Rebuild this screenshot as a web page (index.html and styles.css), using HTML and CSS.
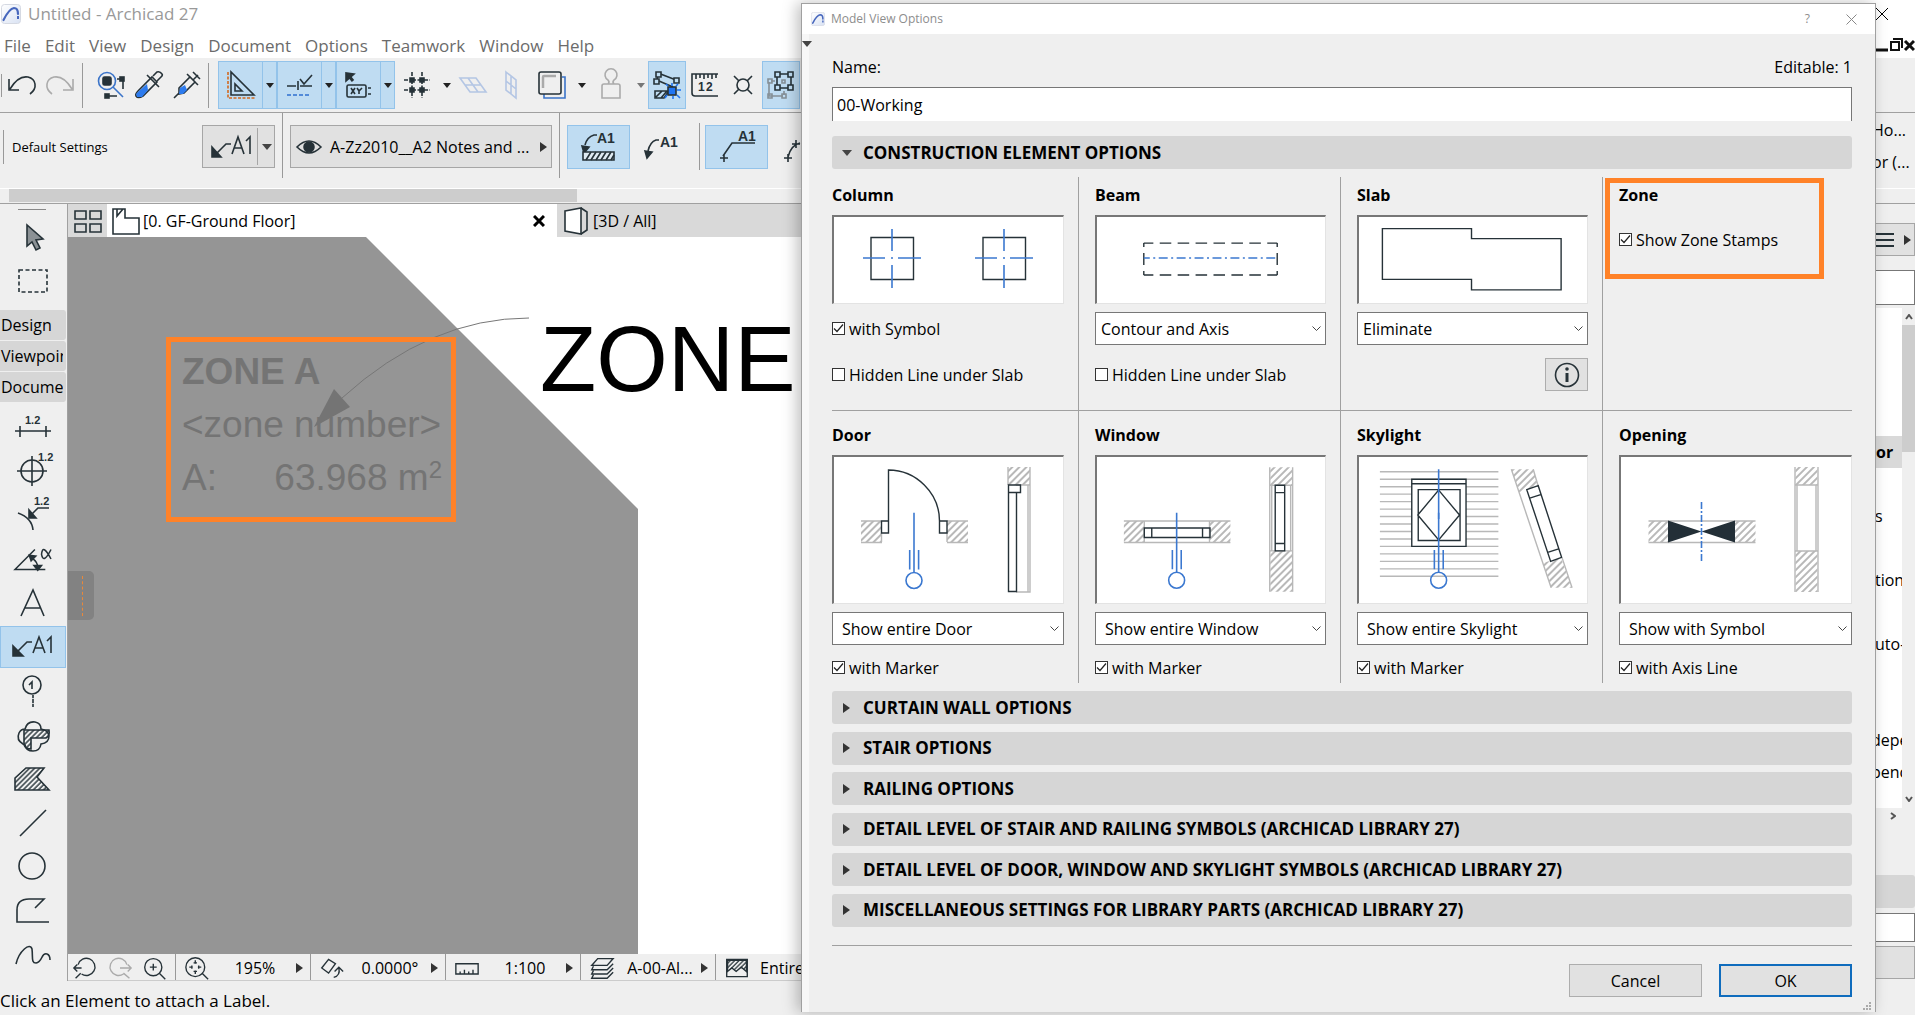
FILE: index.html
```html
<!DOCTYPE html>
<html lang="en">
<head>
<meta charset="utf-8">
<title>Untitled - Archicad 27</title>
<link rel="stylesheet" href="styles.css">
</head>
<body>
<svg class="defs" aria-hidden="true">
  <defs>
    <pattern id="hatch" width="5" height="5" patternUnits="userSpaceOnUse" patternTransform="rotate(45)"><path d="M1 0V5" stroke="#a6a6a6" stroke-width="1.6"/></pattern>
    <pattern id="darkhatch" width="3.6" height="3.6" patternUnits="userSpaceOnUse" patternTransform="rotate(45)"><path d="M1 0V4" stroke="#263238" stroke-width="1.4"/></pattern>
    <linearGradient id="logo" x1="0" y1="0" x2="1" y2="1"><stop offset="0" stop-color="#fff"/><stop offset="1" stop-color="#d9e2f3"/></linearGradient>
    <symbol id="app" viewBox="0 0 20 20"><rect x=".5" y=".5" width="19" height="19" rx="3" fill="url(#logo)" stroke="#d5d9e2"/><path d="M2.500 16C6 9 9 4.500 13 4Q17 4 17 10" fill="none" stroke="#4767bd" stroke-width="2.200" stroke-linecap="round"/><path d="M17 12v3" stroke="#4767bd" stroke-width="2"/></symbol>
    <symbol id="marker" viewBox="0 0 20 78"><path d="M10 0V60M5.700 37.500V57M14.600 37.500V57"/><circle cx="10" cy="68" r="8"/></symbol>
  </defs>
</svg>

<div class="app">
  <header class="titlebar"><svg class="logo"><use href="#app"/></svg><span>Untitled - Archicad 27</span>
    <button class="win-close" aria-label="Close"><svg width="14" height="14"><path d="M1 1L13 13M13 1L1 13" stroke="#000" fill="none"/></svg></button>
  </header>
  <nav class="menubar">
    <a href="#">File</a><a href="#">Edit</a><a href="#">View</a><a href="#">Design</a><a href="#">Document</a><a href="#">Options</a><a href="#">Teamwork</a><a href="#">Window</a><a href="#">Help</a>
    <svg class="doc-controls" width="40" height="16"><path d="M1 13h12" stroke="#111" stroke-width="3"/><path d="M16 5h8v8h-8zM18 2h9v9" fill="none" stroke="#111" stroke-width="2"/><path d="M30 4l9 9M39 4l-9 9" stroke="#111" stroke-width="3"/></svg>
  </nav>

  <div class="toolbar">
    <i class="grip"></i>
    <button class="tool" aria-label="Undo"><svg class="ic" viewBox="0 0 28 28"><path d="M1 8V19H11M2 18C8 8 14 5 20 6C28 8 30 17 22 23"/></svg></button>
    <button class="tool dim" aria-label="Redo"><svg class="ic" viewBox="0 0 28 28"><path d="M27 8V19H17M26 18C20 8 14 5 8 6C0 8-2 17 6 23"/></svg></button>
    <i class="sep"></i>
    <button class="tool" aria-label="Find"><svg class="ic" viewBox="0 0 28 28"><g stroke="#3b74c9"><circle cx="10" cy="10" r="8.500"/><path d="M16 16L26 26"/></g><rect x="6" y="6" width="8" height="8" rx="1.500" class="f"/><path d="M20 8h6M26 8v10M9 25h11"/><rect x="23" y="6" width="4" height="4" class="f"/><rect x="8" y="23" width="4" height="4" class="f"/></svg></button>
    <button class="tool" aria-label="Pick up"><svg class="ic" viewBox="0 0 28 28"><path d="M3 20L17 6l5 5L8 25Q3 28 1 25Q0 23 3 20z" fill="none"/><path d="M4 20l8-7 1 6-6 7-5 0-1-3z" fill="#2d7bee" stroke="none"/><path d="M12 4L24 16M18 5l4-4q3-1 5 2 1 1-1 3l-4 4"/></svg></button>
    <button class="tool" aria-label="Inject"><svg class="ic" viewBox="0 0 28 28"><path d="M1 27l5-5M6 17L17 6l5 5L11 22l-5 1zM14 3l11 11M20 1l7 7M20 9l5-5"/><path d="M7 17l5-3 2 5-4 4-4 0z" fill="#2d7bee" stroke="none"/></svg></button>
    <i class="sep wide"></i>
    <span class="split on"><button aria-label="Guide lines"><svg class="ic" viewBox="0 0 28 28"><path d="M4 1V24H27zM8 13v7h7z"/><path d="M1 1V27H28" stroke="#d2691e" stroke-dasharray="3 1.500"/></svg></button><button class="drop" aria-label="Guide line options"></button></span>
    <span class="split on"><button aria-label="Snap guides"><svg class="ic" viewBox="0 0 28 28"><path d="M1 15h9M12 10v9M14 15h12M14 8l4 5 8-9"/><path d="M1 24h24" stroke="#2f6fd0" stroke-dasharray="4 2"/></svg></button><button class="drop" aria-label="Snap guide options"></button></span>
    <span class="split on"><button aria-label="Coordinates"><svg class="ic" viewBox="0 0 28 28"><path d="M1 2v8l8-7z" class="f"/><path d="M4 5l4 5" stroke-width="3"/><rect x="2" y="14" width="19" height="12" rx="1.500"/><path d="M6 17l4 6M10 17l-4 6M12 17l2 3 3-3M14 20v3M23 17h3M23 23h3"/></svg></button><button class="drop" aria-label="Coordinate options"></button></span>
    <span class="split"><button aria-label="Grid"><svg class="ic" viewBox="0 0 28 28"><path d="M1 9h5M9 9h9M21 9h6M1 19h5M9 19h9M21 19h6M9 1v5M9 9v9M9 21v6M19 1v5M19 9v9M19 21v6" stroke-dasharray="4 1.500"/><path d="M7 7h4v4h-4zM17 7h4v4h-4zM7 17h4v4h-4zM17 17h4v4h-4z" class="f"/></svg></button><button class="drop" aria-label="Grid options"></button></span>
    <button class="tool pale" aria-label="Editing plane"><svg class="ic" viewBox="0 0 28 28"><path d="M1 7h16l10 14H11zM6 14h16M9 7l10 14"/></svg></button>
    <button class="tool pale" aria-label="Vertical plane"><svg class="ic" viewBox="0 0 28 28"><path d="M9 1l10 8v18L9 19zM14 5v18M9 10l10 8"/></svg></button>
    <span class="split"><button aria-label="Trace"><svg class="ic" viewBox="0 0 28 28"><path d="M6 23v4h21V6h-3" stroke="#3b74c9"/><rect x="1" y="1" width="22" height="22" rx="2"/><path d="M5 17V6q0-1 1-1h12" stroke="#aaa" stroke-width="2.500"/></svg></button><button class="drop" aria-label="Trace options"></button></span>
    <span class="split dim"><button aria-label="Gravity"><svg class="ic" viewBox="0 0 28 28"><path d="M5 27V15q0-2 2-2h14q2 0 2 2V27zM11 13q2-2 0-4a6 6 0 1 1 6 0q-2 2 0 4"/></svg></button><button class="drop" aria-label="Gravity options"></button></span>
    <button class="tool on" aria-label="Edit selection"><svg class="ic" viewBox="0 0 28 28"><path d="M5 2l18 7M4 9L5 3M6 10l14 6M2 20h14l-5 7H2zM3 26l6-6M8 27l6-7"/><path d="M3 1h5v5h-5zM1 8h5v5h-5zM21 7h5v5h-5z" fill="#bfddf3"/><rect x="15" y="16" width="8" height="8" fill="#1f74f2"/><path d="M13 13l2 2M19 12v3M25 13l-2 2M24 19h4M24 24l3 3M20 25v3M14 24l-2 3" stroke="#1f74f2"/></svg></button>
    <button class="tool" aria-label="Measure"><svg class="ic" viewBox="0 0 28 28"><path d="M27 3H1V22q0 3 3 3H27M5 3v5M9 3v4M13 3v5M17 3v4M21 3v5M25 3v4"/><text x="7" y="20">1</text><text x="15" y="20">2</text></svg></button>
    <button class="tool" aria-label="Suspend groups"><svg class="ic" viewBox="0 0 28 28"><circle cx="14" cy="14" r="6"/><path d="M5 5l5 5M23 5l-5 5M5 23l5-5M23 23l-5-5"/></svg></button>
    <button class="tool on" aria-label="Group"><svg class="ic" viewBox="0 0 28 28"><g stroke="#858f96"><path d="M2 11v14h14M4 10h4M17 20v4"/><path d="M1 8h4v4h-4zM1 23h4v4h-4zM15 23h4v4h-4zM15 9h3v3h-3z"/></g><path d="M10 3h14v14H10z"/><path d="M8 1h5v5h-5zM21 1h5v5h-5zM8 14h5v5h-5zM21 14h5v5h-5z" fill="#bfddf3"/></svg></button>
  </div>

  <div class="infobar">
    <div class="info-row">
      <i class="grip tall"></i>
      <span class="default">Default Settings</span>
      <button class="field label-pick" aria-label="Label settings"><svg class="ic a1" viewBox="0 0 42 28"><path d="M4 22l11-11h5M21 21l6-17 6 17M23 15h8M35 8l4-4v17"/><path d="M1 14v10h9z" class="f"/></svg><i class="split-line"></i><b class="caret big"></b></button>
      <i class="vline"></i>
      <button class="field layer"><svg class="ic" viewBox="0 0 28 28"><path d="M2 14Q14 2 26 14Q14 26 2 14z"/><circle cx="14" cy="14" r="5" class="f"/></svg><span>A-Zz2010__A2 Notes and ...</span><b class="caret right"></b></button>
      <i class="vline"></i>
      <button class="mode on" aria-label="Associative label"><svg class="ic m" viewBox="0 0 36 32"><path d="M4 14q2-8 9-10h3"/><path d="M1 15l7 1-5 6z" class="f"/><text x="16" y="12">A1</text><path d="M2 21h31v8H2z" fill="#dfeaf2"/><path d="M5 29l5-8M10 29l5-8M15 29l5-8M20 29l5-8M25 29l5-8M30 29l3-5"/></svg></button>
      <button class="mode" aria-label="Independent label"><svg class="ic m" viewBox="0 0 36 32"><path d="M4 20q2-9 8-11h3"/><path d="M1 20l7 1-5 6z" class="f"/><text x="16" y="16">A1</text></svg></button>
      <i class="vline short"></i>
      <button class="mode on" aria-label="Broken pointer"><svg class="ic m" viewBox="0 0 36 32"><path d="M4 25L13 12h23M1 27h8M5 23v8"/><text x="19" y="10">A1</text></svg></button>
      <button class="mode" aria-label="Straight pointer"><svg class="ic m" viewBox="0 0 36 32"><path d="M6 26q3-12 12-14M2 27h8M6 23v8M10 13h8M14 9v8M20 13h8M24 9v8"/></svg></button>
    </div>
    <div class="hscroll"><i></i></div>
    <div class="info-side"><span>Ho...</span><span>or (...</span></div>
  </div>

  <main class="work">
    <aside class="toolbox">
      <i class="handle"></i>
      <button aria-label="Arrow"><svg class="ic t" viewBox="0 0 36 36"><path d="M12 6v21l5-4 4 8 4-2-4-8 7-1z" fill="#8b9195"/></svg></button>
      <button aria-label="Marquee"><svg class="ic t" viewBox="0 0 36 36"><rect x="4" y="7" width="28" height="22" stroke-dasharray="4 2.500"/></svg></button>
      <button class="group">Design</button><button class="group">Viewpoint</button><button class="group">Document</button>
      <button aria-label="Dimension"><svg class="ic t" viewBox="0 0 36 36"><path d="M0 22h36M5 17v11M31 17v11"/><text x="10" y="15">1.2</text></svg></button>
      <button aria-label="Level dimension"><svg class="ic t" viewBox="0 0 36 36"><circle cx="17" cy="18" r="11"/><path d="M17 3v30M2 18h30"/><text x="23" y="8">1.2</text></svg></button>
      <button aria-label="Radial dimension"><svg class="ic t" viewBox="0 0 36 36"><path d="M3 16q14 5 15 17M15 19l8-8h11"/><path d="M14 13v8h7z" class="f"/><text x="19" y="8">1.2</text></svg></button>
      <button aria-label="Angle dimension"><svg class="ic t" viewBox="0 0 38 36"><path d="M32 29H0L21 8M18 17q6 4 6 10"/><path d="M15 14l7 1-5 5zM20 25h8l-4 5z" class="f"/><path d="M39 8q-8 16-10 5q1-12 10 5" transform="translate(-1 0)"/></svg></button>
      <button aria-label="Text"><svg class="ic t" viewBox="0 0 36 36"><path d="M6 31L18 5l11 26M10 23h16"/></svg></button>
      <button class="on" aria-label="Label"><svg class="ic l" viewBox="0 0 42 28"><path d="M4 20l11-11h5M21 20l6-16 6 16M23 15h8M35 8l4-4v16"/><path d="M1 13v10h10z" class="f"/></svg></button>
      <button aria-label="Grid element"><svg class="ic t" viewBox="0 0 36 36"><circle cx="17" cy="12" r="9"/><path d="M14 12l3-3v7M18 22v12" /><path d="M18 25v1M18 30v1" stroke="#efefef"/></svg></button>
      <button aria-label="Change"><svg class="ic t" viewBox="0 0 36 36"><path d="M8 27q-7-4-4-11q2-4 6-4q2-8 10-7q6 1 6 7q7 1 8 7q0 7-8 8q-1 7-8 7q-7 0-8-6z"/><path d="M9 13h25q1 6-3 8H16v11q-7 0-7-6z" fill="url(#darkhatch)"/></svg></button>
      <button aria-label="Fill"><svg class="ic t" viewBox="0 0 36 36"><path d="M0 29V17L11 7H29L22 16L34 29z" fill="url(#darkhatch)"/></svg></button>
      <button aria-label="Line"><svg class="ic t" viewBox="0 0 36 36"><path d="M5 31L31 5"/></svg></button>
      <button aria-label="Circle"><svg class="ic t" viewBox="0 0 36 36"><circle cx="17" cy="17" r="13"/></svg></button>
      <button aria-label="Polyline"><svg class="ic t" viewBox="0 0 36 36"><path d="M34 29H2V17Q2 6 14 6H29L20 15"/></svg></button>
      <button aria-label="Spline"><svg class="ic t" viewBox="0 0 36 36"><path d="M1 27C4 14 15 5 17 12C18 20 16 26 21 26C28 25 26 15 32 17Q35 18 35 23"/></svg></button>
    </aside>

    <section class="viewer">
      <div class="tabs">
        <button class="tabgrid" aria-label="Tab overview"><svg class="ic" viewBox="0 0 28 28"><path d="M1 4h11v8H1zM16 4h11v8H16zM1 17h11v8H1zM16 17h11v8H16z"/></svg></button>
        <button class="tab active"><svg class="ic" viewBox="0 0 28 28"><path d="M1 2H13V11H27V27H1zM5 2v7l6-7"/></svg><span>[0. GF-Ground Floor]</span><svg class="x" width="12" height="12"><path d="M1 1l10 10M11 1L1 11" stroke="#000" stroke-width="3"/></svg></button>
        <button class="tab"><svg class="ic" viewBox="0 0 28 28"><path d="M3 4L19 1V27L3 24z" fill="#fff"/><path d="M19 1l6 4v18l-6 4"/></svg><span>[3D / All]</span></button>
      </div>
      <div class="canvas">
        <svg class="plan" width="734" height="717" viewBox="68 237 734 717">
          <path d="M68 237H366L638 509V954H68z" fill="#959595"/>
          <path d="M529 318Q430 318 342 398" fill="none" stroke="#777"/>
          <path d="M334 389L350 407L314 427z" fill="#747474"/>
        </svg>
        <div class="stamp"><strong>ZONE A</strong><span>&lt;zone number&gt;</span><span class="area"><span>A:</span><span>63.968 m<sup>2</sup></span></span></div>
        <div class="zone-label">ZONE</div>
        <i class="side-tab"></i>
      </div>
      <div class="viewbar">
        <div class="nav">
          <button aria-label="Zoom back"><svg class="ic" viewBox="0 0 28 28"><path d="M6 10a10 10 0 1 1 4 11M10 14H1M5 10l-4 4 4 4M9 20l-6 6"/></svg></button>
          <button class="dim" aria-label="Zoom forward"><svg class="ic" viewBox="0 0 28 28"><path d="M22 10a10 10 0 1 0-4 11M14 14h13M23 10l4 4-4 4M18 20l7 6"/></svg></button>
          <button aria-label="Zoom in"><svg class="ic" viewBox="0 0 28 28"><circle cx="12" cy="13" r="10"/><path d="M19 20l7 7M8 13h8M12 9v8"/></svg></button>
        </div>
        <div class="seg"><svg class="ic" viewBox="0 0 28 28"><circle cx="12" cy="13" r="11"/><path d="M20 20l7 7M12 5v4M10 8h4M12 17v4M10 18h4M5 13h4M8 11v4M15 13h4M16 11v4"/></svg><span>195%</span><b class="caret right"></b></div>
        <div class="seg"><svg class="ic" viewBox="0 0 28 28"><path d="M2 14l8-10 8 5-8 11zM16 25q8-2 6-11M17 18l5-5 5 5"/></svg><span>0.0000°</span><b class="caret right"></b></div>
        <div class="seg"><svg class="ic" viewBox="0 0 28 28"><path d="M1 9h26v12H1zM6 21v-3M11 21v-5M16 21v-3M21 21v-5"/></svg><span>1:100</span><b class="caret right"></b></div>
        <div class="seg"><svg class="ic" viewBox="0 0 28 28"><path d="M9 3h18l-7 8H2zM4 12l-2 4h18l7-7M4 17l-2 4h18l7-7M4 22l-2 4h18l7-7"/></svg><span>A-00-Al...</span><b class="caret right"></b></div>
        <div class="seg"><svg class="ic" viewBox="0 0 28 28"><path d="M2 4h24v20H2z"/><path d="M3 5h22v13l-6-5-6 5-5-4-5 4z" fill="url(#darkhatch)"/></svg><span>Entire</span></div>
      </div>
    </section>

    <aside class="navigator">
      <button class="nav-menu" aria-label="Menu"><svg width="18" height="14"><path d="M0 1h18M0 7h18M0 13h18" stroke="#263238" stroke-width="2"/></svg><b class="caret right"></b></button>
      <input class="nav-input" aria-label="Search">
      <div class="tree">
        <ul><li class="sel">or</li><li></li><li>s</li><li></li><li>tion</li><li></li><li>uto-</li><li></li><li></li><li class="cut">depe</li><li class="cut">penc</li></ul>
        <div class="vscroll"><svg width="8" height="6"><path d="M1 5l3-4 3 4" fill="none" stroke="#555" stroke-width="2"/></svg><i></i><svg width="8" height="6"><path d="M1 1l3 4 3-4" fill="none" stroke="#555" stroke-width="2"/></svg></div>
      </div>
      <svg class="more" width="6" height="8"><path d="M1 1l4 3-4 3" fill="none" stroke="#555" stroke-width="2"/></svg>
      <div class="nav-head"></div>
      <input class="nav-input low" aria-label="Name">
      <button class="nav-btn" aria-label="Settings"></button>
    </aside>
  </main>
  <footer class="status">Click an Element to attach a Label.</footer>
</div>

<div class="dialog" role="dialog" aria-labelledby="dlg-title">
  <header class="dlg-bar"><svg class="dlg-logo"><use href="#app"/></svg><h1 id="dlg-title">Model View Options</h1><button aria-label="Help">?</button><button aria-label="Close"><svg width="11" height="11"><path d="M.5 .5l10 10M10.500 .5l-10 10" stroke="#888" fill="none"/></svg></button></header>
  <div class="dlg-body">
    <div class="name-row"><label for="name">Name:</label><span>Editable: 1</span></div>
    <input id="name" class="name" value="00-Working">
    <button class="bar"><b class="caret big"></b>CONSTRUCTION ELEMENT OPTIONS</button>

    <div class="elements">
      <section>
        <h2>Column</h2>
        <svg class="preview" viewBox="2 2 229 86"><g class="k"><path d="M39 22.500h42.500v42H39zM151 22.500h42.500v42H151z"/></g><g class="b"><path d="M60 14v22M60 50v23M31 43h22M66 43h23M59 43h2M172 14v22M172 50v23M143 43h22M178 43h23M171 43h2"/></g></svg>
        <label class="check"><input type="checkbox" checked>with Symbol</label>
        <label class="check second"><input type="checkbox">Hidden Line under Slab</label>
      </section>
      <section>
        <h2>Beam</h2>
        <svg class="preview" viewBox="2 2 229 86"><g class="k"><path d="M49 28H183M49 60H183" stroke-dasharray="11.600 6.400" stroke-dashoffset="2"/><path d="M49 28v4M183 28v4M49 38v12M183 38v12M49 56v4M183 56v4"/></g><path class="b" d="M49 43H183" stroke-dasharray="9 3.500 2 3.500" stroke-dashoffset="3"/></svg>
        <select aria-label="Beam display"><option>Contour and Axis</option></select>
        <label class="check second"><input type="checkbox">Hidden Line under Slab</label>
      </section>
      <section>
        <h2>Slab</h2>
        <svg class="preview" viewBox="2 2 229 86"><path class="k" d="M25.500 13.500H115V23.500H205V75H115V64.500H25.500z"/></svg>
        <select aria-label="Slab display"><option>Eliminate</option></select>
        <button class="info" aria-label="Information"><svg class="ic" viewBox="0 0 28 28"><circle cx="14" cy="14" r="11.500"/><path d="M14 12v9" stroke-width="3"/><circle cx="14" cy="8" r="1" class="f"/></svg></button>
      </section>
      <section class="zone">
        <h2>Zone</h2>
        <label class="check"><input type="checkbox" checked>Show Zone Stamps</label>
      </section>
      <section>
        <h2>Door</h2>
        <svg class="preview tall" viewBox="2 2 229 146"><path class="h" d="M29 66h20v21H29zM115 66h21v21h-21zM176 12h22v18h-22z"/><path class="g" d="M29 66h20M29 87.500h21M115 66h21M115 87.500h21M115 78v9M49.500 78v9M176 12v18M198 12v125H184M196 30v107M184 30h14"/><path class="k" d="M56.500 66V15C84 15 107.500 38 107.500 66M49.500 66h7v12h-7zM107.500 66h7.500v12h-7.500zM176.500 30h12v7.500h-12zM176.500 37.500h8V136.500h-8z"/><use class="b" href="#marker" x="72" y="57.500" width="20" height="78"/></svg>
        <select class="in" aria-label="Door display"><option>Show entire Door</option></select>
        <label class="check"><input type="checkbox" checked>with Marker</label>
      </section>
      <section>
        <h2>Window</h2>
        <svg class="preview tall" viewBox="2 2 229 146"><path class="h" d="M29 66h20v21H29zM115 66h21v21h-21zM176 12h22v18h-22zM176 96h22v41h-22z"/><path class="g" d="M29 66h107M29 87.500h107M49.500 66v21M115 66v21M175.500 12v125M198.500 12v125M177.500 30v66M196.500 30v66M176 30h22M176 96h22"/><path class="k" d="M49.500 73h66v9.500h-66zM57 73v9.500M108 73v9.500M181 30h9.500v66H181zM181 37.500h9.500M181 88.500h9.500"/><use class="b" href="#marker" x="72" y="57.500" width="20" height="78"/></svg>
        <select class="in" aria-label="Window display"><option>Show entire Window</option></select>
        <label class="check"><input type="checkbox" checked>with Marker</label>
      </section>
      <section>
        <h2>Skylight</h2>
        <svg class="preview tall" viewBox="2 2 229 146"><path class="g" d="M23 16.500h119M23 24h119M23 31.500h119M23 39h119M23 46.500h119M23 54h119M23 61.500h119M23 69h119M23 76.500h119M23 84h119M23 91.500h119M23 99h119M23 106.500h119M23 114h119M23 121.500h119"/><path class="k" fill="#fff" d="M55 24h54.500v67.500H55z"/><path class="k" d="M55 28.500h54.500M61.500 34.500h42v51h-42zM82 35l21 25-21 25-21-25z"/><path class="h" d="M155 14h22l5 17-19 6zM187 108l18-5 11 30h-21z"/><path class="g" d="M155 14l40 119M177 14l5 17M206 103l10 30"/><path class="k" d="M170.500 34.500L182 30.500 205.500 102.500 194.500 106.500zM173.500 43l11-3.500M191.500 97.500l11-3.500"/><path class="b" d="M82 14v50"/><use class="b" href="#marker" x="72" y="57.500" width="20" height="78"/></svg>
        <select class="in" aria-label="Skylight display"><option>Show entire Skylight</option></select>
        <label class="check"><input type="checkbox" checked>with Marker</label>
      </section>
      <section>
        <h2>Opening</h2>
        <svg class="preview tall" viewBox="2 2 229 146"><path class="h" d="M29 66h20v21H29zM115 66h21v21h-21zM176 12h22v18h-22zM176 96h22v41h-22z"/><path class="g" d="M29 66h107M29 87.500h107M175.500 12v125M198.500 12v125M177.500 30v66M196.500 30v66M176 30h22M176 96h22"/><path fill="#232f37" d="M48.500 65.500L82 76.500 115.500 65.500V87.500L82 76.500 48.500 87.500z"/><path class="b" d="M82 47v59" stroke-dasharray="7 2 2 2"/></svg>
        <select class="in" aria-label="Opening display"><option>Show with Symbol</option></select>
        <label class="check"><input type="checkbox" checked>with Axis Line</label>
      </section>
    </div>

    <div class="bars">
      <button class="bar"><b class="caret right"></b>CURTAIN WALL OPTIONS</button>
      <button class="bar"><b class="caret right"></b>STAIR OPTIONS</button>
      <button class="bar"><b class="caret right"></b>RAILING OPTIONS</button>
      <button class="bar"><b class="caret right"></b>DETAIL LEVEL OF STAIR AND RAILING SYMBOLS (ARCHICAD LIBRARY 27)</button>
      <button class="bar"><b class="caret right"></b>DETAIL LEVEL OF DOOR, WINDOW AND SKYLIGHT SYMBOLS (ARCHICAD LIBRARY 27)</button>
      <button class="bar"><b class="caret right"></b>MISCELLANEOUS SETTINGS FOR LIBRARY PARTS (ARCHICAD LIBRARY 27)</button>
    </div>

    <footer class="actions"><button>Cancel</button><button class="primary">OK</button></footer>
  </div>
  <b class="caret big edge-mark"></b>
  <svg class="resize" width="9" height="9"><path d="M6 0h2v2h-2zM3 3h2v2h-2zM6 3h2v2h-2zM0 6h2v2h-2zM3 6h2v2h-2zM6 6h2v2h-2z" fill="#aaa"/></svg>
</div>
</body>
</html>
```

FILE: styles.css
```css
*, *::before, *::after { box-sizing: border-box; }
body {
  margin: 0;
  position: relative;
  min-height: 100vh;
  overflow: hidden;
  background: #efefef;
  color: #000;
  font: 16px/22px "Open Sans", "Noto Sans", sans-serif;
}
button, input, select { font: inherit; color: inherit; margin: 0; border-radius: 0; }
button { background: none; border: 0; padding: 0; display: flex; align-items: center; justify-content: center; }
.defs { position: absolute; width: 0; height: 0; }

.ic { width: 28px; height: 28px; fill: none; stroke: #263238; stroke-width: 1.6; flex: none; overflow: visible; }
.ic .f { fill: #263238; }
.ic text { font: bold 12px "Liberation Sans", sans-serif; fill: #263238; stroke: none; }
.dim .ic { stroke: #ababab; }
.pale .ic { stroke: #b4c6e4; }
.on { background: #bfdcf2; border: 1px solid #93c3ea; }

.caret { width: 0; height: 0; flex: none; border: 4px solid transparent; border-top: 5px solid #222; border-bottom: 0; box-sizing: content-box; }
.caret.big { border-width: 6px 5px 0; border-top-color: #444; }
.caret.right { border: 5px solid transparent; border-left: 7px solid #333; border-right: 0; }

/* Application window */
.app { min-height: 100vh; display: flex; flex-direction: column; }
.titlebar { height: 31px; padding: 0 26px 4px 1px; display: flex; align-items: center; gap: 7px; background: #fff; color: #999; font-size: 17px; }
.logo { width: 20px; height: 20px; }
.win-close { margin-left: auto; }
.menubar { height: 27px; padding-left: 4px; padding-top: 2px; display: flex; align-items: center; gap: 14px; background: #fff; font-size: 17px; line-height: 24px; }
.menubar a { color: #6b6b6b; text-decoration: none; }
.doc-controls { margin-left: auto; margin-bottom: 2px; }

.toolbar { height: 55px; padding-left: 1px; display: flex; align-items: center; border-bottom: 1px solid #a0a0a0; }
.toolbar > * { flex: none; }
.grip { width: 1px; height: 23px; margin-right: 1px; background: #999; }
.grip.tall { height: 34px; margin: 0 8px 0 3px; }
.sep { width: 1px; height: 45px; margin: 0 9px 0 3px; background: #999; }
.sep.wide { margin: 0 9px 0 2px; }
.tool { width: 38px; height: 48px; }
.split { display: flex; width: 59px; height: 48px; }
.split > button { width: 43px; }
.split > .drop { width: 14px; flex: none; }
.split:not(.on) > button { width: 44px; }
.split:not(.on) > .drop { width: 15px; }
.on > .drop { border-left: 1px solid #93c3ea; }
.drop::after { content: ""; box-sizing: content-box; border: 4px solid transparent; border-top: 5px solid #222; border-bottom: 0; }
.dim .drop::after { border-top-color: #777; }

.infobar { position: relative; height: 91px; border-bottom: 1px solid #a0a0a0; display: flex; flex-direction: column; }
.info-row { height: 75px; display: flex; align-items: center; padding-bottom: 8px; }
.info-row > * { flex: none; }
.default { width: 190px; font-size: 13px; }
.field { height: 43px; border: 1px solid #a6a6a6; background: #e1e1e1; }
.label-pick { width: 73px; justify-content: space-between; padding: 0 2px 0 8px; }
.split-line { width: 1px; height: 37px; background: #a6a6a6; }
.ic.a1 { width: 42px; }
.vline { width: 1px; height: 65px; margin: 0 7px; background: #999; align-self: flex-start; }
.vline.short { height: 47px; margin: 0 5px 0 6px; align-self: center; }
.layer { width: 262px; padding: 0 4px; gap: 7px; }
.layer span { flex: 1; text-align: left; white-space: nowrap; }
.mode { width: 63px; height: 44px; }
.ic.m { width: 36px; height: 32px; }
.ic.m text { font-size: 14px; }
.hscroll { height: 15px; padding-left: 9px; border-top: 1px solid #fff; }
.hscroll i { display: block; width: 568px; height: 13px; background: #cdcdcd; }
.info-side { position: absolute; right: 0; top: 1px; width: 43px; display: flex; flex-direction: column; line-height: 32px; }

.work { flex: 1; display: flex; min-height: 0; }
.toolbox { width: 68px; flex: none; border-right: 1px solid #a0a0a0; display: flex; flex-direction: column; padding-right: 1px; overflow: hidden; }
.handle { height: 1px; width: 28px; margin: 5px 0 5px 18px; background: #888; flex: none; }
.toolbox button { height: 44px; width: 66px; flex: none; }
.toolbox button.group { height: 30px; margin-bottom: 1px; padding-left: 1px; justify-content: flex-start; background: #d6d6d6; border-radius: 0 3px 3px 0; overflow: hidden; border-right: 3px solid #d6d6d6; }
.toolbox button:nth-of-type(3) { margin-top: 7px; }
.toolbox button:nth-of-type(5) { margin-bottom: 3px; }
.ic.t { width: 36px; height: 36px; }
.ic.l { width: 42px; height: 28px; }
.ic.t text { font-size: 11px; }
.toolbox .on { height: 42px; margin: 1px 0; }

.viewer { flex: 1; display: flex; flex-direction: column; min-width: 0; }
.tabs { height: 33px; display: flex; background: #d9d9d9; }
.tabgrid { width: 39px; }
.tab { padding: 0 6px 0 5px; gap: 3px; }
.tab.active { width: 450px; background: #fff; justify-content: flex-start; }
.tab .x { margin-left: auto; margin-right: 6px; }
.canvas { flex: 1; position: relative; background: #fff; overflow: hidden; }
.plan { position: absolute; left: 0; top: 0; }
.stamp {
  position: absolute; left: 98px; top: 100px; width: 290px; height: 185px;
  padding: 3px 9px 3px 11px; border: 5px solid #ff8228;
  display: flex; flex-direction: column;
  color: #747474; font: 37px/53px "Liberation Sans", Arial, sans-serif;
}
.area { display: flex; justify-content: space-between; }
.stamp sup { font-size: 24px; line-height: 0; vertical-align: 12px; }
.zone-label { position: absolute; left: 472px; top: 68px; font: 92px/108px "Liberation Sans", Arial, sans-serif; }
.side-tab { position: absolute; left: 0; top: 334px; width: 26px; height: 49px; border-radius: 0 5px 5px 0; background: #828282; }
.side-tab::after { content: ""; position: absolute; left: 14px; top: 5px; height: 40px; border-left: 1px dashed #e8883a; }

.viewbar { height: 27px; display: flex; border-bottom: 1px solid #ccc; }
.nav { width: 107px; display: flex; justify-content: space-between; padding: 1px 8px 0 5px; }
.viewbar .ic { width: 24px; height: 24px; }
.seg { width: 135px; flex: none; border-left: 1px solid #999; display: flex; align-items: center; padding: 2px 7px 0 9px; }
.seg span { flex: 1; text-align: center; padding-left: 5px; }
.seg span:last-child { text-align: left; padding-left: 11px; }
.status { height: 34px; padding-top: 9px; font-size: 17px; }

.navigator { width: 44px; flex: none; display: flex; flex-direction: column; align-items: stretch; }
.nav-menu { height: 33px; margin-top: 19px; border: 1px solid #a6a6a6; background: #e1e1e1; justify-content: flex-end; gap: 10px; padding-right: 3px; }
.nav-input { width: 100%; height: 35px; margin-top: 14px; border: 1px solid #777; background: #fff; }
.tree { height: 500px; margin-top: 3px; display: flex; background: #fff; }
.tree ul { list-style: none; margin: 0; padding: 128px 0 0; width: 31px; line-height: 32px; overflow: hidden; }
.tree li { height: 32px; padding-left: 4px; }
.tree .cut { padding-left: 0; }
.tree .sel { padding-left: 5px; background: #d9d9d9; font-weight: bold; }
.vscroll { width: 13px; background: #efefef; display: flex; flex-direction: column; align-items: center; padding: 6px 0; }
.vscroll i { width: 13px; height: 127px; margin: 5px 0 auto; background: #cdcdcd; }
.more { margin: 4px 0 0 19px; }
.nav-head { height: 33px; margin-top: 55px; background: #d6d6d6; border-radius: 0 3px 3px 0; }
.nav-input.low { height: 29px; margin-top: 5px; }
.nav-btn { height: 33px; margin-top: 4px; border: 1px solid #a6a6a6; background: #e1e1e1; flex: none; }

/* Model View Options window, floating over the application */
.dialog {
  position: absolute; left: 801px; right: 39px; top: 3px; bottom: 3px;
  display: flex; flex-direction: column;
  border: 1px solid #a0a0a0; border-bottom: 0;
  background: #efefef;
  box-shadow: -4px 0 14px rgba(0, 0, 0, .25);
}
.dlg-bar { height: 30px; background: #fff; display: flex; align-items: center; padding: 0 18px 0 9px; color: #8d8d8d; font-size: 12px; }
.dlg-logo { width: 14px; height: 14px; margin-right: 6px; }
.dlg-bar h1 { margin: 0 auto 0 0; font-size: 12px; font-weight: normal; }
.dlg-bar button { margin-left: 36px; }
.dlg-body { flex: 1; display: flex; flex-direction: column; padding: 22px 23px 15px; border-left: 7px solid #f7f7f7; }
.edge-mark { position: absolute; left: 0; top: 37px; }
.name-row { display: flex; justify-content: space-between; }
.name { width: 100%; height: 34px; margin-top: 9px; padding: 0 4px; background: #fff; border: 1px solid #777; border-bottom: 0; flex: none; }
.bar { width: 100%; height: 33px; flex: none; justify-content: flex-start; padding-left: 10px; gap: 11px; background: #d6d6d6; border-radius: 3px; font-size: 17px; font-weight: bold; white-space: nowrap; }
.bar .caret.right { margin: 0 2px 0 1px; }
.name + .bar { margin-top: 15px; }

.elements { margin-top: 8px; display: grid; grid-template-columns: 247fr 262fr 262fr 249fr; grid-template-rows: 234px 272px; }
.elements section { position: relative; min-width: 0; display: flex; flex-direction: column; padding: 7px 14px 0 16px; border-right: 1px solid #a0a0a0; }
.elements section:nth-child(4n+1) { padding-left: 0; }
.elements section:nth-child(4n) { padding-right: 0; border-right: 0; }
.elements section:nth-child(-n+4) { border-bottom: 1px solid #a0a0a0; }
.elements section:nth-child(n+5) { padding-top: 13px; }
.elements h2 { margin: 0 0 9px; font-size: 16px; line-height: 22px; }
.preview { width: 100%; height: 89px; flex: none; background: #fff; border: 1px solid #e3e3e3; border-width: 2px 1px 1px 2px; border-top-color: #777; border-left-color: #777; fill: none; margin-bottom: 8px; }
.preview.tall { height: 149px; }
.k { stroke: #263238; stroke-width: 1.4; }
.b { stroke: #3b78d0; stroke-width: 1.6; fill: none; }
.g { stroke: #b8b8b8; stroke-width: 1.4; }
.h { fill: url(#hatch); }
select {
  width: 100%; height: 33px; flex: none; appearance: none; padding: 0 24px 0 5px; border: 1px solid #777;
  background: #fff url("data:image/svg+xml,%3Csvg xmlns='http://www.w3.org/2000/svg' width='9' height='6'%3E%3Cpath d='M.5 .5l4 4 4-4' fill='none' stroke='%23444'/%3E%3C/svg%3E") no-repeat right 4px center;
}
select.in { padding-left: 9px; }
.check { height: 33px; display: flex; align-items: center; gap: 4px; white-space: nowrap; }
.check input { appearance: none; width: 13px; height: 13px; border: 1px solid #333; background: #fff; flex: none; }
.check input:checked { background: #fff url("data:image/svg+xml,%3Csvg xmlns='http://www.w3.org/2000/svg' width='11' height='11'%3E%3Cpath d='M1 5.500l3 3 6-7' fill='none' stroke='%23222' stroke-width='1.200'/%3E%3C/svg%3E"); }
.check.second, .info { margin-top: 13px; }
.tall ~ .check { margin-top: 7px; }
.info { width: 43px; height: 33px; align-self: flex-end; border: 1px solid #adadad; background: #e1e1e1; }
.zone .check { margin-top: 8px; }
.zone::after { content: ""; position: absolute; left: 2px; top: 1px; width: 219px; height: 101px; border: 5px solid #ff8228; }
.bars { flex: 1; margin-top: 8px; display: flex; flex-direction: column; justify-content: space-between; }
.actions { margin-top: 18px; padding-top: 18px; border-top: 1px solid #a0a0a0; display: flex; justify-content: flex-end; gap: 17px; }
.actions button { width: 133px; height: 33px; border: 1px solid #adadad; background: #e1e1e1; }
.actions .primary { border: 2px solid #0f6cbd; }
.resize { position: absolute; right: 3px; bottom: 1px; }
```
